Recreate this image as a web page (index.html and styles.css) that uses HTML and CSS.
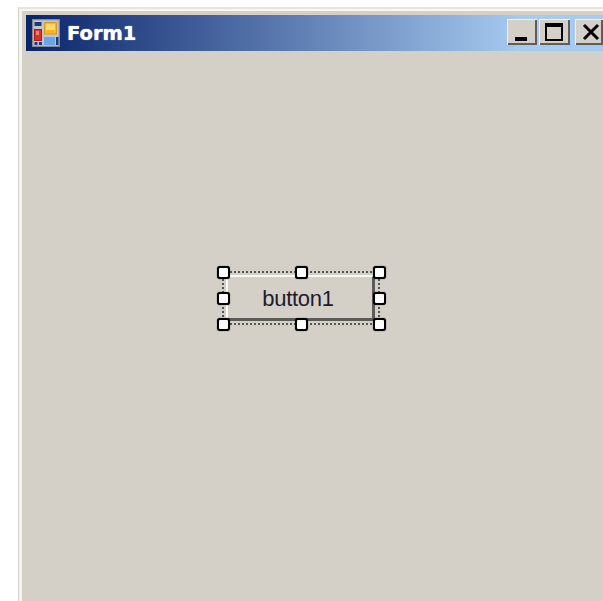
FILE: index.html
```html
<!DOCTYPE html>
<html lang="en">
<head>
<meta charset="utf-8">
<title>Form1</title>
<link rel="stylesheet" href="styles.css">
</head>
<body>
<div class="window">
  <div class="frame">
    <header class="titlebar">
      <svg class="app-icon" width="28" height="28" viewBox="0 0 28 28">
        <rect x="0.5" y="0.5" width="27" height="27" fill="#c3c5cb" stroke="#85888f" stroke-width="1.5"/>
        <rect x="2.5" y="3" width="7" height="4" fill="#1c3a7c"/>
        <rect x="12.5" y="3.5" width="12" height="11.5" fill="#f6b81e" stroke="#d79a20"/>
        <rect x="14" y="5" width="9" height="6" fill="#fcd96a"/>
        <rect x="2.5" y="10.5" width="7" height="11" fill="#d92f24" stroke="#a92020"/>
        <rect x="4" y="12" width="3" height="4" fill="#f08070"/>
        <rect x="12" y="18" width="11" height="8" fill="#6aa4ee"/>
        <rect x="2.5" y="23" width="3" height="3" fill="#1c3a7c"/>
        <rect x="7" y="23" width="3" height="3" fill="#1c3a7c"/>
        <rect x="24" y="18" width="2.5" height="8" fill="#1c3a7c"/>
      </svg>
      <span class="title">Form1</span>
      <div class="controls">
        <div class="ctl ctl-min">
          <svg width="30" height="26" viewBox="0 0 30 26"><rect x="8" y="18" width="12" height="4" fill="#000"/></svg>
        </div>
        <div class="ctl ctl-max">
          <svg width="31" height="26" viewBox="0 0 31 26"><path d="M6 4h18v18H6z M8 8v12h14V8z" fill="#000" fill-rule="evenodd"/></svg>
        </div>
        <div class="ctl ctl-close">
          <svg width="28" height="26" viewBox="0 0 28 26"><path d="M9 6l14 14M23 6L9 20" stroke="#000" stroke-width="3" fill="none"/></svg>
        </div>
      </div>
    </header>
    <main class="surface">
      <div class="selection">
        <div class="button">button1</div>
        <span class="grip grip-tl"></span>
        <span class="grip grip-tc"></span>
        <span class="grip grip-tr"></span>
        <span class="grip grip-ml"></span>
        <span class="grip grip-mr"></span>
        <span class="grip grip-bl"></span>
        <span class="grip grip-bc"></span>
        <span class="grip grip-br"></span>
      </div>
    </main>
  </div>
</div>
</body>
</html>
```

FILE: styles.css
```css
html, body {
  margin: 0;
  height: 100%;
  background: #fff;
  overflow: hidden;
}

.window {
  box-sizing: border-box;
  height: 594px;
  margin: 7px 0 0 18px;
  border-top: 2px solid #e6e4dd;
  border-left: 1px solid #d4d0c8;
}

.frame {
  box-sizing: border-box;
  height: 100%;
  display: flex;
  flex-direction: column;
  padding: 4px 0 0 4px;
  background: #d4d0c8;
  border-top: 2px solid #f8f7f4;
  border-left: 3px solid #f4f3ef;
}

.titlebar {
  box-sizing: border-box;
  height: 36px;
  flex: none;
  display: flex;
  align-items: center;
  padding-left: 6px;
  background: linear-gradient(to right, #0a246a, #a6caf0 86%);
}

.app-icon {
  flex: none;
}

.title {
  margin: 1px 0 0 7px;
  font: bold 19.5px/1 "DejaVu Sans", sans-serif;
  color: #fff;
  text-shadow: 0 0 1px #fff;
}

.controls {
  display: flex;
  align-self: flex-start;
  margin: 4px 0 0 auto;
}

.ctl {
  box-sizing: border-box;
  height: 26px;
  background: #d4d0c8;
  border-top: 1px solid #f4f3ef;
  border-left: 1px solid #f4f3ef;
  box-shadow: inset -2px -2px 0 #5f5d59;
}

.ctl svg {
  display: block;
  margin: -1px 0 0 -1px;
}

.ctl-min { width: 30px; margin-right: 2px; }
.ctl-max { width: 31px; margin-right: 5px; }
.ctl-close { width: 28px; }

.surface {
  flex: 1;
  padding: 220px 0 0 196px;
}

.selection {
  position: relative;
  box-sizing: border-box;
  width: 158px;
  height: 54px;
  padding: 2px 3px 0 2px;
  border: 2px dotted #555;
}

.button {
  box-sizing: border-box;
  height: 46px;
  display: flex;
  align-items: center;
  justify-content: center;
  padding: 3px 4px 0 0;
  border-top: 2px solid #fbfaf8;
  border-left: 2px solid #fbfaf8;
  border-right: 3px solid #5c5b58;
  border-bottom: 3px solid #5c5b58;
  font: 22px/1 "Liberation Sans", sans-serif;
  letter-spacing: -0.3px;
  color: #1d1b2c;
}

.grip {
  position: absolute;
  box-sizing: border-box;
  width: 13px;
  height: 13px;
  background: #fff;
  border: 2px solid #000;
  border-radius: 3px;
  box-shadow: 0 0 1px #222;
}

.grip-tl, .grip-tc, .grip-tr { top: -7px; }
.grip-ml, .grip-mr { top: 19px; }
.grip-bl, .grip-bc, .grip-br { top: 45px; }
.grip-tl, .grip-ml, .grip-bl { left: -7px; }
.grip-tc, .grip-bc { left: 71px; }
.grip-tr, .grip-mr, .grip-br { left: 149px; }
```
